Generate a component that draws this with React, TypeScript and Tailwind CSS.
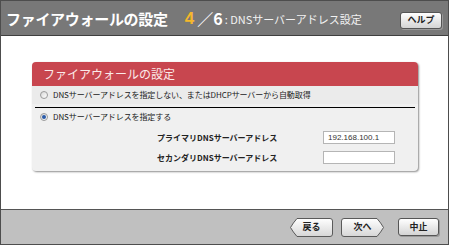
const jp = "font-['MS_UI_Gothic','Noto_Sans_CJK_JP',sans-serif]";

const Radio = ({ checked }: { checked?: boolean }) => (
  <span className="flex h-[8px] w-[8px] shrink-0 items-center justify-center rounded-full border border-[#9a9a9a] bg-gradient-to-br from-[#d8d8d8] to-white">
    {checked && <span className="h-[4px] w-[4px] rounded-full bg-[#2a5aa8]" />}
  </span>
);

const ArrowButton = ({ label, dir }: { label: string; dir: "left" | "right" }) => (
  <button className="relative flex h-[19px] w-[43px] items-center justify-center">
    <svg className="absolute inset-0" width="43" height="19" viewBox="0 0 43 19">
      <defs>
        <linearGradient id={`g-${dir}`} x1="0" y1="0" x2="0" y2="1">
          <stop offset="0" stopColor="#ffffff" />
          <stop offset="1" stopColor="#d6d6d6" />
        </linearGradient>
      </defs>
      {dir === "left" ? (
        <path
          d="M7 0.5 H40 Q42.5 0.5 42.5 3 V16 Q42.5 18.5 40 18.5 H7 Q3 14 0.5 9.5 Q3 5 7 0.5 Z"
          fill={`url(#g-${dir})`}
          stroke="#5a5a5a"
        />
      ) : (
        <path
          d="M36 0.5 H3 Q0.5 0.5 0.5 3 V16 Q0.5 18.5 3 18.5 H36 Q40 14 42.5 9.5 Q40 5 36 0.5 Z"
          fill={`url(#g-${dir})`}
          stroke="#5a5a5a"
        />
      )}
    </svg>
    <span className={`relative text-[9px] font-bold text-[#222] ${jp}`}>{label}</span>
  </button>
);

const PlainButton = ({ label, className = "" }: { label: string; className?: string }) => (
  <button
    className={`flex h-[17px] w-[41px] items-center justify-center rounded-[3px] border border-[#555] bg-gradient-to-b from-white to-[#d4d4d4] shadow-[1px_1px_0_#9a9a9a] text-[9px] font-bold text-[#222] ${jp} ${className}`}
  >
    {label}
  </button>
);

const App = () => {
  return (
    <div className="h-[245px] w-[450px] bg-white">
      <div className="flex h-[245px] w-[449px] flex-col border border-[#4d4d4d]">
        <header className="flex h-[35px] shrink-0 items-center border-b border-[#3f3f3f] bg-[#787878] pl-[5px] pr-[6px]">
          <h1 className={`text-[15px] font-bold leading-none tracking-[-0.3px] text-white ${jp}`}>
            ファイアウォールの設定
          </h1>
          <span className="ml-[17px] font-['Liberation_Sans',sans-serif] text-[17px] font-bold leading-none text-[#f5b72b]">
            4
          </span>
          <span className={`ml-[3px] text-[16px] font-bold leading-none text-white ${jp}`}>／6</span>
          <span className={`ml-[2px] mt-[2px] text-[11px] leading-none text-[#f2f2f2] ${jp}`}>
            : DNSサーバーアドレス設定
          </span>
          <div className="ml-auto">
            <PlainButton label="ヘルプ" className="mt-[4px] w-[42px] h-[16px]" />
          </div>
        </header>

        <main className="flex-1 bg-white pl-[31px] pt-[26px]">
          <section className="w-[386px] overflow-hidden rounded-[4px] bg-[#f0f0f0] shadow-[1px_1px_2px_rgba(0,0,0,0.45)]">
            <div className={`flex h-[24px] items-center bg-[#c8464f] pl-[11px] text-[12px] leading-none text-[#fbeaea] ${jp}`}>
              ファイアウォールの設定
            </div>
            <div className={`flex h-[18px] items-center gap-[5px] bg-[#ebebeb] pl-[8px] text-[8px] tracking-[-0.1px] leading-none text-[#222] ${jp}`}>
              <Radio />
              DNSサーバーアドレスを指定しない、またはDHCPサーバーから自動取得
            </div>
            <div className="mx-[3px] mt-[3px] h-[1px] bg-black" />
            <div className={`flex h-[18px] items-center gap-[5px] pl-[8px] text-[8px] tracking-[-0.1px] leading-none text-[#222] ${jp}`}>
              <Radio checked />
              DNSサーバーアドレスを指定する
            </div>
            <div className={`grid grid-cols-[166px_1fr] items-center gap-y-[7px] pb-[7px] pl-[125px] pt-[5px] text-[8px] font-bold leading-none text-[#222] ${jp}`}>
              <span>プライマリDNSサーバーアドレス</span>
              <div className="flex h-[13px] w-[72px] items-center border border-[#b5b5b5] bg-white pl-[4px] font-['Liberation_Sans',sans-serif] text-[8px] font-normal text-[#333]">
                192.168.100.1
              </div>
              <span>セカンダリDNSサーバーアドレス</span>
              <div className="h-[13px] w-[72px] border border-[#b5b5b5] bg-white" />
            </div>
          </section>
        </main>

        <footer className="flex h-[35px] shrink-0 items-center border-t border-[#555] bg-[#c0c0c0] pl-[289px] pr-[9px]">
          <ArrowButton label="戻る" dir="left" />
          <div className="ml-[8px]">
            <ArrowButton label="次へ" dir="right" />
          </div>
          <PlainButton label="中止" className="ml-auto h-[18px] w-[40px]" />
        </footer>
      </div>
    </div>
  );
};

export default App;
